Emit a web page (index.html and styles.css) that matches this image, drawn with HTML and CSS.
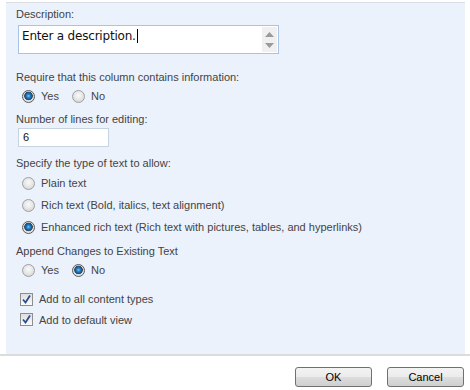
FILE: index.html
```html
<!DOCTYPE html>
<html lang="en">
<head>
<meta charset="UTF-8" />
<title>Column settings</title>
<link rel="stylesheet" href="styles.css">
</head>
<body>

<div class="panel">
  <div class="label">Description:</div>
  <div class="textarea">
    <span class="text">Enter a description.</span><span class="caret"></span>
    <div class="scroll">
      <svg width="9" height="5" viewBox="0 0 9 5"><path d="M4.5 0 L9 5 L0 5 Z" fill="#9a9a9a"/></svg>
      <svg width="9" height="5" viewBox="0 0 9 5"><path d="M0 0 L9 0 L4.5 5 Z" fill="#9a9a9a"/></svg>
    </div>
  </div>

  <div class="label gap-lg">Require that this column contains information:</div>
  <div class="inline-row">
    <span class="opt"><span class="radio on"></span>Yes</span>
    <span class="opt"><span class="radio"></span>No</span>
  </div>

  <div class="label gap-sm">Number of lines for editing:</div>
  <div class="input">6</div>

  <div class="label gap-md">Specify the type of text to allow:</div>
  <div class="stack">
    <div class="opt row"><span class="radio"></span>Plain text</div>
    <div class="opt row"><span class="radio"></span>Rich text (Bold, italics, text alignment)</div>
    <div class="opt row"><span class="radio on"></span>Enhanced rich text (Rich text with pictures, tables, and hyperlinks)</div>
  </div>

  <div class="label gap-sm">Append Changes to Existing Text</div>
  <div class="inline-row">
    <span class="opt"><span class="radio"></span>Yes</span>
    <span class="opt"><span class="radio on"></span>No</span>
  </div>

  <div class="checks">
    <div class="check-row">
      <span class="checkbox"><svg width="11" height="11" viewBox="0 0 11 11"><path d="M2 5.5 L4.5 8.5 L9 1.5" fill="none" stroke="#2b4d8f" stroke-width="1.8"/></svg></span>
      Add to all content types
    </div>
    <div class="check-row">
      <span class="checkbox"><svg width="11" height="11" viewBox="0 0 11 11"><path d="M2 5.5 L4.5 8.5 L9 1.5" fill="none" stroke="#2b4d8f" stroke-width="1.8"/></svg></span>
      Add to default view
    </div>
  </div>
</div>

<div class="footer">
  <button class="btn">OK</button>
  <button class="btn">Cancel</button>
</div>

</body>
</html>
```

FILE: styles.css
```css
body { margin: 0; background: #fff; font-family: "Liberation Sans", Arial, sans-serif; font-size: 11px; color: #444; }

.panel { margin: 2px 5px 0 6px; border-top: 1px solid #d9dde3; background: #ebf2fc; padding: 4px 0 18px 10px; height: 329px; box-sizing: content-box; }
.label { line-height: 14px; }
.gap-sm { margin-top: 6px; }
.gap-md { margin-top: 9px; }
.gap-lg { margin-top: 16px; }

.textarea { display: flex; align-items: flex-start; margin: 4px 0 0 2px; width: 259px; height: 27px; border: 1px solid #a9c3e6; background: #fff; position: relative; }
.textarea .text { font-family: "DejaVu Sans", Verdana, sans-serif; font-size: 12px; color: #111; padding: 3px 0 0 3px; line-height: 15px; letter-spacing: -0.2px; }
.caret { display: inline-block; width: 1px; height: 14px; background: #000; margin: 3px 0 0 1px; }
.scroll { position: absolute; right: 1px; top: 1px; bottom: 1px; width: 15px; background: #f0f0f0; display: flex; flex-direction: column; align-items: center; justify-content: space-between; padding: 5px 0 4px; box-sizing: border-box; }

.inline-row { display: flex; gap: 13px; height: 20px; align-items: center; margin-top: 2px; padding-left: 6px; }
.opt { display: flex; align-items: center; color: #444; }
.stack { margin-top: 2px; padding-left: 6px; }
.row { height: 22px; }

.radio { width: 11px; height: 11px; border-radius: 50%; border: 1px solid #a0a0a0; margin-right: 6px; flex: none;
  background: radial-gradient(circle at 50% 40%, #fafafa 0, #e8e8e8 45%, #cdcdcd 100%); }
.radio.on { border-color: #5a5a5a;
  background: radial-gradient(circle at 50% 45%, #7fd0ff 0, #2a8ad0 1.5px, #145a9a 3.2px, #3c4a58 4px, #dcdcdc 4.6px, #f4f4f4 100%); }

.input { margin: 2px 0 0 2px; width: 85px; height: 17px; border: 1px solid #c6d3e3; background: #fff; color: #111; line-height: 17px; padding-left: 4px; box-sizing: content-box; }

.checks { margin-top: 9px; padding-left: 4px; }
.check-row { display: flex; align-items: center; height: 20.5px; gap: 6px; color: #444; }
.checkbox { width: 11px; height: 11px; border: 1px solid #8e8e8e; background: linear-gradient(#dedede, #fbfbfb); display: flex; align-items: center; justify-content: center; flex: none; }

.footer { border-top: 2px solid #dcdcdc; display: flex; justify-content: flex-end; gap: 15px; padding: 11px 6px 0 0; }
.btn { width: 77px; height: 20px; border: 1px solid #707070; border-radius: 3px; background: linear-gradient(#f3f3f3 0, #ebebeb 50%, #dddddd 51%, #cfcfcf 100%); font-family: "Liberation Sans", Arial, sans-serif; font-size: 11px; color: #000; padding: 0; }
```
